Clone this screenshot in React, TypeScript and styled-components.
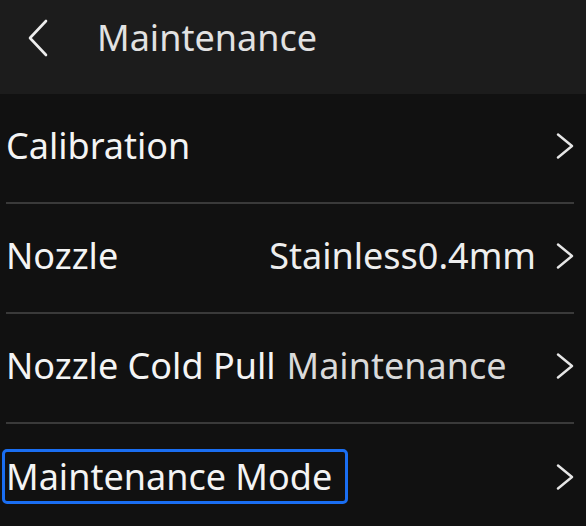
import React from 'react';
import styled, { createGlobalStyle } from 'styled-components';

const GlobalStyle = createGlobalStyle`
  html, body {
    margin: 0;
    padding: 0;
    background: #111111;
  }
  body {
    font-family: 'Noto Sans', 'Open Sans', sans-serif;
    color: #f2f2f2;
  }
`;

const Screen = styled.div`
  width: 586px;
  height: 526px;
  overflow: hidden;
  background: #111111;
`;

const Header = styled.header`
  height: 94px;
  box-sizing: border-box;
  padding-bottom: 18px;
  display: flex;
  align-items: center;
  background: #1c1c1c;
`;

const BackButton = styled.button`
  width: 98px;
  height: 40px;
  padding: 0 0 0 27px;
  margin: 0;
  border: none;
  background: transparent;
  display: flex;
  align-items: center;
  justify-content: flex-start;
  color: #ededed;
`;

const Title = styled.h1`
  margin: 0 0 2px -1px;
  font-size: 36px;
  font-weight: 400;
  color: #e2e2e2;
`;

const List = styled.div`
  padding: 0 12px 0 6px;
`;

const Row = styled.div<{ $last?: boolean }>`
  height: 110px;
  box-sizing: border-box;
  padding-bottom: 5px;
  display: flex;
  align-items: center;
  border-bottom: ${(p) => (p.$last ? 'none' : '2px solid #3a3a3a')};
`;

const Label = styled.span<{ $focused?: boolean }>`
  font-size: 36px;
  color: #f4f4f4;
  white-space: nowrap;
  margin-left: ${(p) => (p.$focused ? '-4px' : '0')};
  padding: ${(p) => (p.$focused ? '0 13px 0 1px' : '0')};
  border: ${(p) => (p.$focused ? '3px solid #1a6ef2' : 'none')};
  border-radius: 5px;
`;

const Trailing = styled.div`
  margin-left: auto;
  display: flex;
  align-items: center;
`;

const Value = styled.span<{ $dim?: boolean }>`
  font-size: 36px;
  color: ${(p) => (p.$dim ? '#dadada' : '#eeeeee')};
  white-space: nowrap;
`;

const InlineValue = styled(Value)`
  margin-left: 11px;
`;

const Chevron = styled.span`
  padding-left: 20px;
  display: flex;
  align-items: center;
  color: #e6e6e6;
`;

function ArrowRight() {
  return (
    <svg width="18" height="26" viewBox="0 0 18 26" fill="none">
      <path d="M2 1.5 L16 13 L2 24.5" stroke="currentColor" strokeWidth="2.4" strokeLinecap="round" strokeLinejoin="round" />
    </svg>
  );
}

function ArrowLeft() {
  return (
    <svg width="21" height="38" viewBox="0 0 21 38" fill="none">
      <path d="M19 2 L3 19 L19 36" stroke="currentColor" strokeWidth="2.6" strokeLinecap="round" strokeLinejoin="round" />
    </svg>
  );
}

export default function App() {
  return (
    <>
      <GlobalStyle />
      <Screen>
        <Header>
          <BackButton aria-label="Back">
            <ArrowLeft />
          </BackButton>
          <Title>Maintenance</Title>
        </Header>
        <List>
          <Row>
            <Label>Calibration</Label>
            <Trailing>
              <Chevron>
                <ArrowRight />
              </Chevron>
            </Trailing>
          </Row>
          <Row>
            <Label>Nozzle</Label>
            <Trailing>
              <Value>Stainless0.4mm</Value>
              <Chevron>
                <ArrowRight />
              </Chevron>
            </Trailing>
          </Row>
          <Row>
            <Label>Nozzle Cold Pull</Label>
            <InlineValue $dim>Maintenance</InlineValue>
            <Trailing>
              <Chevron>
                <ArrowRight />
              </Chevron>
            </Trailing>
          </Row>
          <Row $last>
            <Label $focused>Maintenance Mode</Label>
            <Trailing>
              <Chevron>
                <ArrowRight />
              </Chevron>
            </Trailing>
          </Row>
        </List>
      </Screen>
    </>
  );
}
